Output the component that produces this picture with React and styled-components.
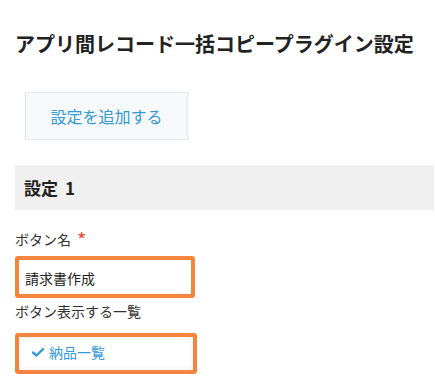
import React from "react";
import styled, { createGlobalStyle } from "styled-components";

const Global = createGlobalStyle`
  html, body { margin: 0; padding: 0; background: #fff; }
  body { font-family: "Noto Sans CJK JP", "Noto Sans", sans-serif; color: #333; }
`;

const Page = styled.div`
  padding: 0 1px 0 15px;
`;

const Title = styled.h1`
  margin: 29px 0 0;
  font-size: 20px;
  line-height: 30px;
  font-weight: 700;
  color: #222;
`;

const AddButton = styled.button`
  display: block;
  margin: 33px 0 0 10px;
  width: 163px;
  height: 48px;
  padding: 0;
  background: #f7f9fa;
  border: 1px solid #e3e7e8;
  color: #3498db;
  font-family: inherit;
  font-size: 16px;
  cursor: pointer;
`;

const SectionHeader = styled.h2`
  margin: 25px 0 0;
  height: 45px;
  padding-left: 9px;
  background: #f0f0f0;
  font-size: 17px;
  line-height: 45px;
  font-weight: 700;
  color: #222;
`;

const Num = styled.span`
  margin-left: 7px;
`;

const Label = styled.div`
  margin-top: ${(p) => p.$top}px;
  font-size: 14px;
  line-height: 20px;
  color: #333;
`;

const Required = styled.span`
  display: inline-block;
  color: #e74c3c;
  margin-left: 6px;
  font-size: 20px;
  line-height: 0;
  vertical-align: -3px;
`;

const Highlight = styled.div`
  box-sizing: border-box;
  margin-top: ${(p) => p.$top}px;
  width: ${(p) => p.$w}px;
  height: ${(p) => p.$h}px;
  border: 4px solid #f5843f;
  border-radius: 3px;
  background: #fff;
  display: flex;
`;

const TextValue = styled.div`
  flex: 1;
  padding-left: 6px;
  display: flex;
  align-items: center;
  font-size: 14px;
  color: #222;
  padding-top: 2px;
`;

const Choice = styled.div`
  flex: 1;
  display: flex;
  align-items: center;
  gap: 5px;
  padding-left: 13px;
  padding-bottom: 3px;
  box-shadow: inset 0 0 6px rgba(0, 0, 0, 0.07);
  color: #3498db;
  font-size: 14px;
`;

const Check = () => (
  <svg width="12" height="9" viewBox="0 0 12 9">
    <path d="M1 4.5 L4.5 7.5 L11 1.2" fill="none" stroke="#3498db" strokeWidth="2.4" strokeLinecap="round" strokeLinejoin="round" />
  </svg>
);

export default function App() {
  return (
    <Page>
      <Global />
      <Title>アプリ間レコード一括コピープラグイン設定</Title>
      <AddButton>設定を追加する</AddButton>
      <SectionHeader>
        設定<Num>1</Num>
      </SectionHeader>
      <Label $top={19}>
        ボタン名<Required>*</Required>
      </Label>
      <Highlight $top={7} $w={180} $h={42}>
        <TextValue>請求書作成</TextValue>
      </Highlight>
      <Label $top={3}>ボタン表示する一覧</Label>
      <Highlight $top={12} $w={182} $h={41}>
        <Choice>
          <Check />
          納品一覧
        </Choice>
      </Highlight>
    </Page>
  );
}
